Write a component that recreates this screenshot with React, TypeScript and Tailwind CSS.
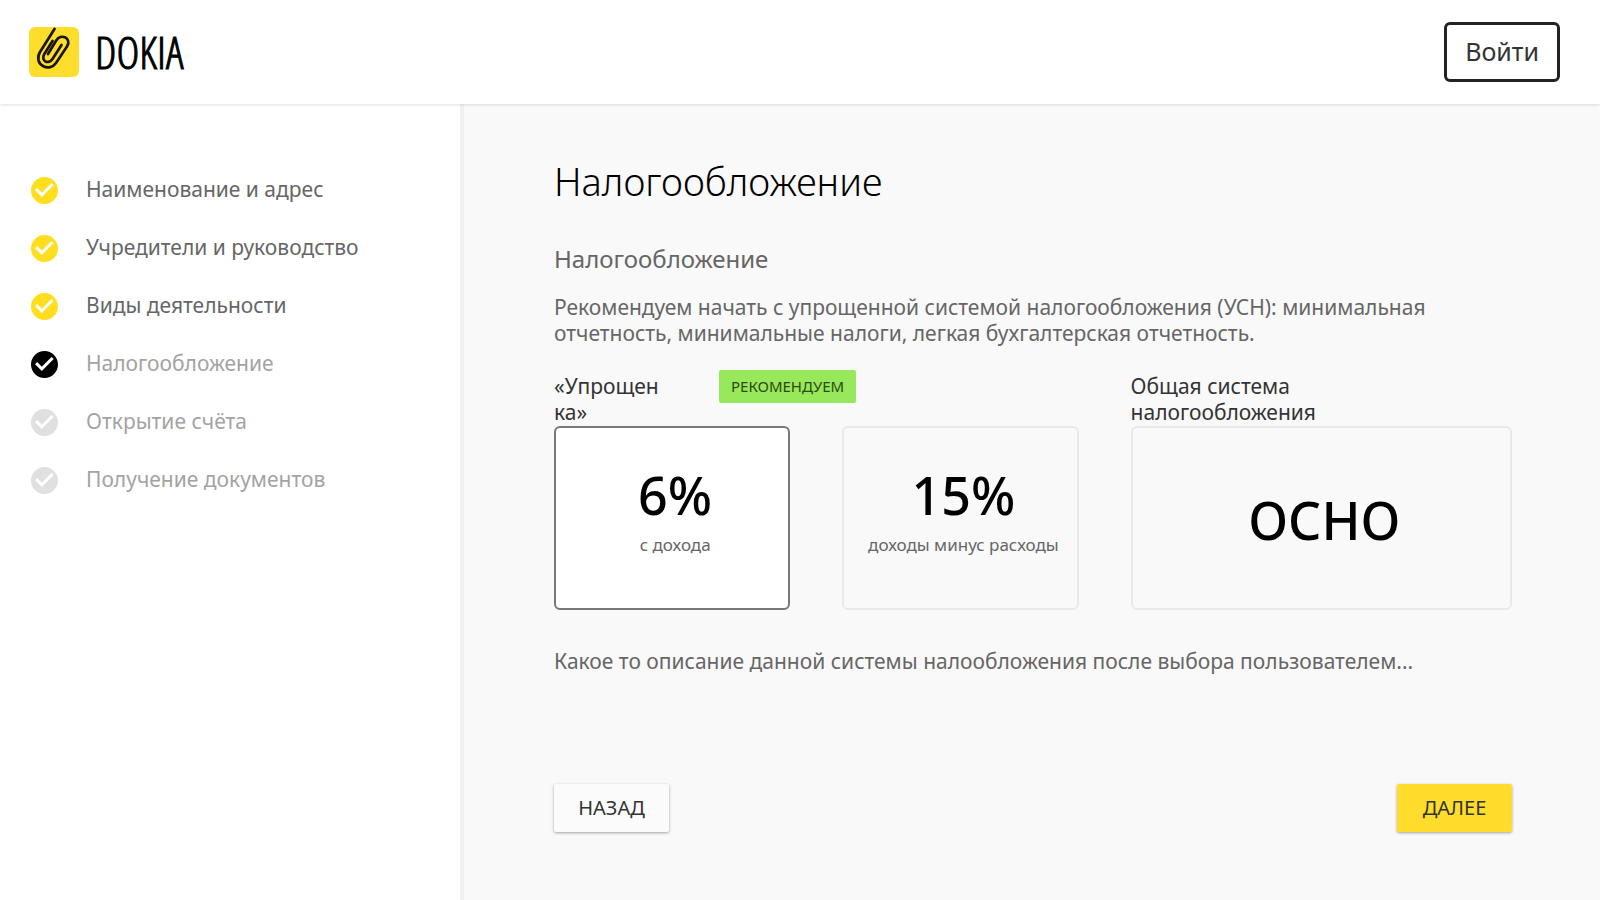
import { useState } from "react";
import clsx from "clsx";

type StepState = "done" | "current" | "todo";

const steps: { title: string; state: StepState }[] = [
  { title: "Наименование и адрес", state: "done" },
  { title: "Учредители и руководство", state: "done" },
  { title: "Виды деятельности", state: "done" },
  { title: "Налогообложение", state: "current" },
  { title: "Открытие счёта", state: "todo" },
  { title: "Получение документов", state: "todo" },
];

function Logo() {
  return (
    <a href="#" className="flex items-center gap-4 text-black">
      <svg viewBox="0 0 50 50" className="size-[50px]" aria-hidden="true">
        <rect width="50" height="50" rx="6" fill="#ffdd2d" />
        <g fill="none" stroke="#1a1605" strokeWidth="2.7" strokeLinecap="round" strokeLinejoin="round">
          <path d="M25.500 2 L11 25 C7.500 31 9.500 36.500 14 39 C18.500 41.500 24 40.500 27 36 L38 19.500 C41 15 38.500 11.500 36 10.300 C33 9 29.500 10 27.500 13 L19 27" />
          <path d="M23.500 14 L15.300 27 C13.300 30.500 14.500 33.500 16.500 34.500 C18.500 35.500 21.500 35 23.500 32 L32.500 18" />
        </g>
      </svg>
      <span className="font-['Open_Sans_Condensed_Light','Open_Sans_Condensed','Liberation_Sans_Narrow',sans-serif] text-[44px] leading-[50px] font-light [-webkit-text-stroke:1px_#000]">
        DOKIA
      </span>
    </a>
  );
}

function StepIcon({ state }: { state: StepState }) {
  return (
    <svg
      viewBox="2 2 20 20"
      aria-hidden="true"
      className={clsx(
        "size-[27px] shrink-0",
        state === "done" && "fill-[#ffdd1f]",
        state === "current" && "fill-black",
        state === "todo" && "fill-[#e0e0e0]",
      )}
    >
      <path d="M12 2C6.480 2 2 6.480 2 12s4.480 10 10 10 10-4.480 10-10S17.520 2 12 2zm-2 14.800l-5-5 1.600-1.600 3.400 3.400 7.200-7.200 1.600 1.600-8.800 8.800z" />
    </svg>
  );
}

function Sidebar() {
  return (
    <nav className="w-[29%] shrink-0 border-r-4 border-[#f0f0f0] bg-white pt-[57px] pl-[31px]">
      <ol>
        {steps.map((step) => (
          <li key={step.title}>
            <a href="#" className="flex h-[58px] items-center gap-7 text-[21px]">
              <StepIcon state={step.state} />
              <span className={step.state === "done" ? "text-[#666]" : "text-[#a3a3a3]"}>{step.title}</span>
            </a>
          </li>
        ))}
      </ol>
    </nav>
  );
}

type RateCardProps = {
  value: string;
  note?: string;
  checked: boolean;
  onSelect: () => void;
};

function RateCard({ value, note, checked, onSelect }: RateCardProps) {
  return (
    <label
      className={clsx(
        "relative flex h-[184px] cursor-pointer flex-col items-center justify-center rounded-md border-2 pt-1 pl-1.5",
        checked ? "border-[#777] bg-white" : "border-[#e9e9e9]",
      )}
    >
      <input type="radio" name="rate" className="sr-only" checked={checked} onChange={onSelect} />
      <span className="text-[52px] leading-[64px] font-medium text-black">{value}</span>
      {note && <span className="pt-1.5 pb-5 text-[17px] leading-6 whitespace-nowrap text-[#666]">{note}</span>}
    </label>
  );
}

export default function App() {
  const [rate, setRate] = useState("6%");

  return (
    <div className="flex min-h-screen flex-col bg-[#f9f9f9] font-['Noto_Sans',sans-serif]">
      <header className="z-10 flex h-[104px] items-center justify-between bg-white pr-10 pl-[29px] shadow-[0_1px_3px_rgba(0,0,0,0.12)]">
        <Logo />
        <button
          type="button"
          className="h-[60px] rounded-md border-[3px] border-[#222] px-[18px] text-[25px] text-[#333]"
        >
          Войти
        </button>
      </header>

      <div className="flex flex-1">
        <Sidebar />

        <main className="min-w-0 flex-1 pt-[53px] pr-[88px] pb-16 pl-[90px]">
          <h1 className="text-[38px] leading-[48px] font-light text-black">Налогообложение</h1>
          <h2 className="mt-9 text-2xl leading-9 text-[#666]">Налогообложение</h2>
          <p className="mt-[17px] text-[21px] leading-[26px] text-[#666]">
            Рекомендуем начать с упрощенной системой налогообложения (УСН): минимальная отчетность,
            минимальные налоги, легкая бухгалтерская отчетность.
          </p>

          <div className="mt-6 grid grid-cols-[524fr_381fr] gap-[52px]">
            <section>
              <div className="flex h-[56px] items-start gap-[50px]">
                <h3 className="w-[115px] pt-[3px] text-[21px] leading-[26px] break-words text-[#333]">«Упрощенка»</h3>
                <span className="flex h-[33px] items-center rounded-xs bg-[#97e85a] px-3 text-[15px] text-[#2b4a15]">
                  РЕКОМЕНДУЕМ
                </span>
              </div>
              <div className="grid grid-cols-2 gap-[52px]">
                <RateCard value="6%" note="с дохода" checked={rate === "6%"} onSelect={() => setRate("6%")} />
                <RateCard
                  value="15%"
                  note="доходы минус расходы"
                  checked={rate === "15%"}
                  onSelect={() => setRate("15%")}
                />
              </div>
            </section>

            <section>
              <div className="h-[56px]">
                <h3 className="w-[236px] pt-[3px] text-[21px] leading-[26px] text-[#333]">
                  Общая система налогообложения
                </h3>
              </div>
              <RateCard value="ОСНО" checked={rate === "ОСНО"} onSelect={() => setRate("ОСНО")} />
            </section>
          </div>

          <p className="mt-[38px] text-[21px] leading-[26px] text-[#666]">
            Какое то описание данной системы налообложения после выбора пользователем...
          </p>

          <div className="mt-[110px] flex justify-between text-xl text-[#333]">
            <button
              type="button"
              className="h-12 w-[115px] rounded-xs bg-[#fbfbfb] shadow-[0_1px_3px_rgba(0,0,0,0.35)]"
            >
              НАЗАД
            </button>
            <button
              type="button"
              className="h-12 w-[115px] rounded-xs bg-[#ffdd2d] shadow-[0_1px_3px_rgba(0,0,0,0.35)]"
            >
              ДАЛЕЕ
            </button>
          </div>
        </main>
      </div>
    </div>
  );
}
